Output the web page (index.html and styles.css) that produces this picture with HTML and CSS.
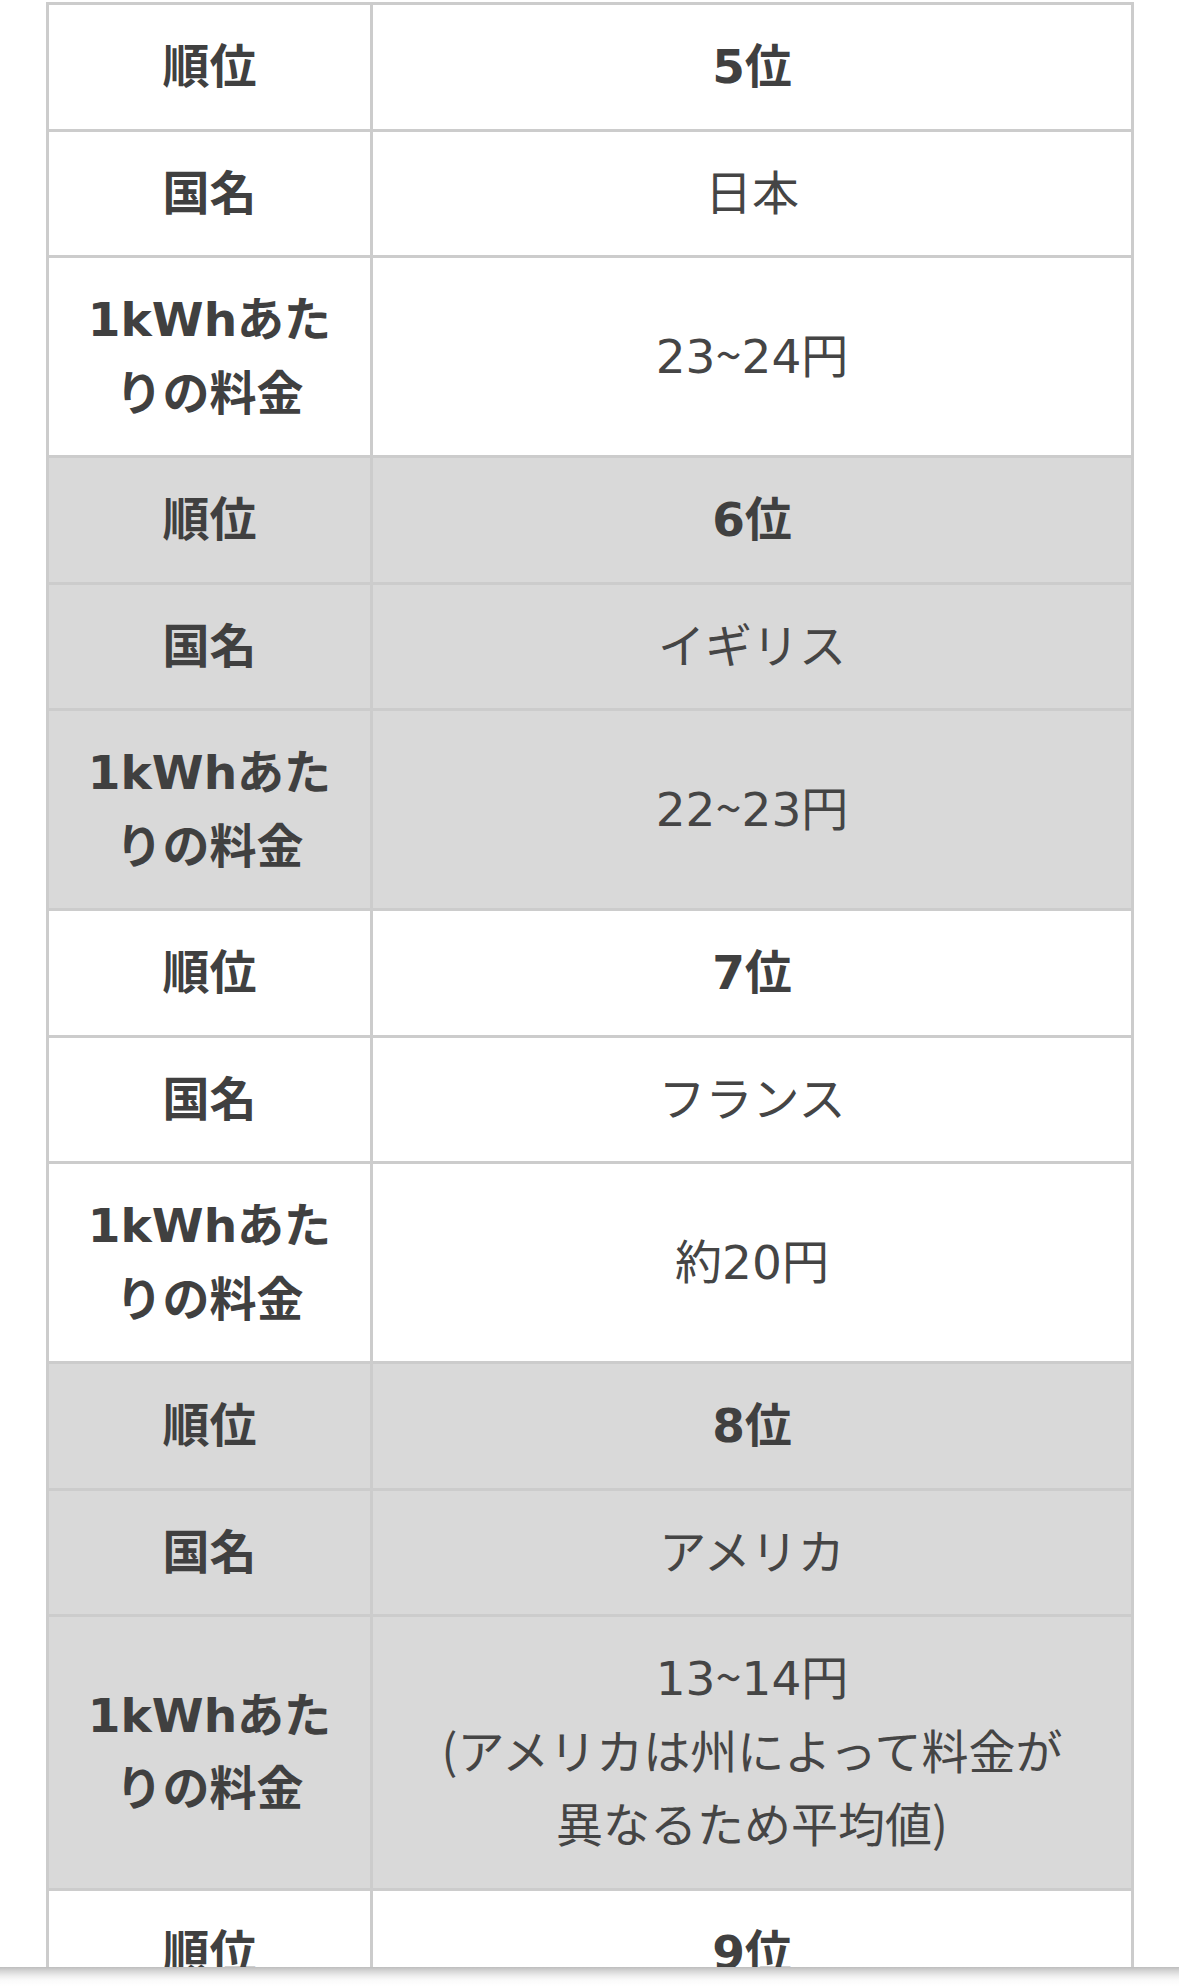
FILE: index.html
```html
<!DOCTYPE html>
<html lang="ja">
<head>
<meta charset="utf-8">
<title>電気料金ランキング</title>
<link rel="stylesheet" href="styles.css">
</head>
<body>
<div class="page">
  <table class="rank-table">
    <tbody class="group">
      <tr><th>順位</th><td class="rank">5位</td></tr>
      <tr><th>国名</th><td>日本</td></tr>
      <tr><th>1kWhあたりの料金</th><td>23<span class="tilde">~</span>24円</td></tr>
    </tbody>
    <tbody class="group alt">
      <tr><th>順位</th><td class="rank">6位</td></tr>
      <tr><th>国名</th><td>イギリス</td></tr>
      <tr><th>1kWhあたりの料金</th><td>22<span class="tilde">~</span>23円</td></tr>
    </tbody>
    <tbody class="group">
      <tr><th>順位</th><td class="rank">7位</td></tr>
      <tr><th>国名</th><td>フランス</td></tr>
      <tr><th>1kWhあたりの料金</th><td>約20円</td></tr>
    </tbody>
    <tbody class="group alt">
      <tr><th>順位</th><td class="rank">8位</td></tr>
      <tr><th>国名</th><td>アメリカ</td></tr>
      <tr><th>1kWhあたりの料金</th><td>13<span class="tilde">~</span>14円<br><span class="paren">(</span>アメリカは州によって料金が異なるため平均値<span class="paren">)</span></td></tr>
    </tbody>
    <tbody class="group">
      <tr><th>順位</th><td class="rank">9位</td></tr>
      <tr><th>国名</th><td>ドイツ</td></tr>
    </tbody>
  </table>
</div>
<div class="toolbar-shadow"></div>
</body>
</html>
```

FILE: styles.css
```css
html, body {
  margin: 0;
  padding: 0;
  background: #ffffff;
}

body {
  font-family: "DejaVu Sans", "Noto Sans CJK JP", sans-serif;
  color: #444444;
  overflow: hidden;
}

.page {
  padding: 2px 45px 0 46px;
}

.rank-table {
  width: 1088px;
  border-collapse: collapse;
  table-layout: fixed;
  font-size: 47px;
  line-height: 73.5px;
}

.rank-table th,
.rank-table td {
  border: 3px solid #cccccc;
  text-align: center;
  vertical-align: middle;
  padding-top: 25px;
  padding-bottom: 25px;
}

.rank-table th {
  width: 277px;
  padding-left: 22px;
  padding-right: 22px;
  font-weight: 700;
  color: #404040;
}

.rank-table td {
  padding-left: 58px;
  padding-right: 58px;
  font-weight: 400;
  color: #454545;
}

.rank-table td.rank {
  font-weight: 700;
  color: #404040;
}

.tilde,
.paren {
  font-family: "Noto Sans CJK JP", sans-serif;
  line-height: 1;
}

.group.alt th,
.group.alt td {
  background: #d9d9d9;
}

.toolbar-shadow {
  position: fixed;
  left: 0;
  right: 0;
  bottom: 0;
  height: 19px;
  background: linear-gradient(to bottom, #bdbdbd 0px, #d6d6d6 4px, #eeeeee 9px, #fafafa 13px, #ffffff 19px);
}
```
